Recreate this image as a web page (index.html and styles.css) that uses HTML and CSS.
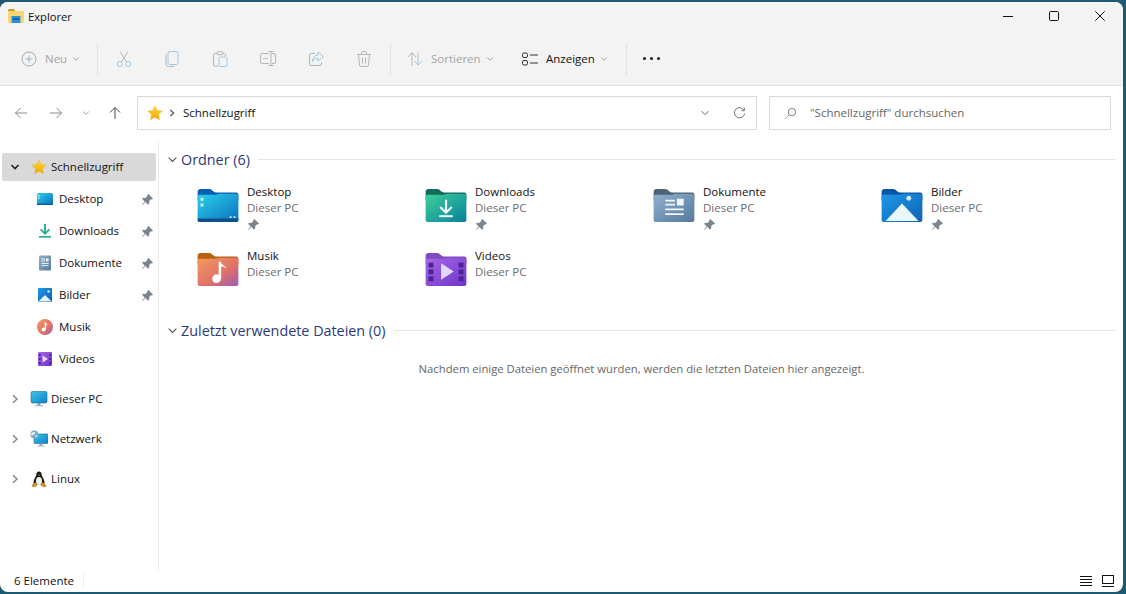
FILE: index.html
```html
<!DOCTYPE html>
<html lang="de">
<head>
<meta charset="utf-8">
<title>Explorer</title>
<link rel="stylesheet" href="styles.css">
</head>
<body>
<svg class="defs" width="0" height="0" aria-hidden="true">
  <defs>
    <linearGradient id="gDesk" x1="0" y1="0" x2="1" y2="1"><stop offset="0" stop-color="#2bd0e8"/><stop offset="1" stop-color="#0a6fc0"/></linearGradient>
    <linearGradient id="gDown" x1="0" y1="0" x2="1" y2="1"><stop offset="0" stop-color="#3fd09a"/><stop offset="1" stop-color="#07809a"/></linearGradient>
    <linearGradient id="gDoc" x1="0" y1="0" x2="1" y2="1"><stop offset="0" stop-color="#8fb0cc"/><stop offset="1" stop-color="#557a9c"/></linearGradient>
    <linearGradient id="gPic" x1="0" y1="0" x2="1" y2="1"><stop offset="0" stop-color="#1f97e6"/><stop offset="1" stop-color="#0f62b4"/></linearGradient>
    <linearGradient id="gMus" x1="0" y1="0" x2="1" y2="1"><stop offset="0" stop-color="#f29a5a"/><stop offset=".6" stop-color="#e0706a"/><stop offset="1" stop-color="#9a5bb8"/></linearGradient>
    <linearGradient id="gVid" x1="0" y1="0" x2="1" y2="1"><stop offset="0" stop-color="#a767e6"/><stop offset="1" stop-color="#6d35c8"/></linearGradient>
    <linearGradient id="gStar" x1="0" y1="0" x2="0" y2="1"><stop offset="0" stop-color="#ffd83a"/><stop offset="1" stop-color="#f2a900"/></linearGradient>
    <linearGradient id="gMon" x1="0" y1="0" x2="1" y2="1"><stop offset="0" stop-color="#3cc8ea"/><stop offset="1" stop-color="#0d7fc8"/></linearGradient>
    <symbol id="star" viewBox="0 0 16 16"><path d="M8 .8l2.2 4.7 5.1.6-3.8 3.5 1 5.1L8 12.2l-4.500 2.500 1-5.100L.7 6.100l5.100-.6z" fill="url(#gStar)" stroke="#e9b44c" stroke-width=".5"/></symbol>
    <symbol id="pin" viewBox="0 0 12 12"><path d="M7 0l5 5-1.200 1-1-.2-2 2.200.2 2.200L6.600 11.600 3.700 8.700.6 11.800 0 11.400l2.900-3.300L0 5.300 1.400 4l2.200.3 2.200-2.100L5.800 1.100z" fill="#7b858e"/></symbol>
    <symbol id="chev" viewBox="0 0 10 10"><path d="M1.500 3.200L5 6.700l3.500-3.500" fill="none" stroke="currentColor" stroke-width="1"/></symbol>
    <symbol id="chevb" viewBox="0 0 10 10"><path d="M1.500 3L5 6.500 8.500 3" fill="none" stroke="currentColor" stroke-width="1.600"/></symbol>
    <symbol id="side" viewBox="0 0 10 10"><path d="M3 1.200L7 5 3 8.800" fill="none" stroke="currentColor" stroke-width="1.500"/></symbol>
    <symbol id="sd" viewBox="0 0 16 16"><rect x="0" y="2" width="16" height="12" rx="1.500" fill="url(#gDesk)"/><rect y="12.600" width="16" height="1.400" fill="#0b5e9e"/><rect x="1.200" y="4" width="1.400" height="1.400" fill="#d8f6fb"/><rect x="1.200" y="6.400" width="1.400" height="1.400" fill="#d8f6fb"/></symbol>
    <symbol id="sdl" viewBox="0 0 16 16"><path d="M8 1v9.400M3.600 6.400L8 10.800l4.400-4.400" fill="none" stroke="#25a98f" stroke-width="1.800"/><rect x="2" y="13" width="12" height="1.600" fill="#25a98f"/></symbol>
    <symbol id="sdoc" viewBox="0 0 16 16"><rect x="2" y=".5" width="12" height="15" rx="1" fill="url(#gDoc)"/><path d="M4.400 4h3.800M4.400 6h3.800M4.400 8.400h7.200M4.400 10.600h7.200" stroke="#eef4f9" stroke-width="1"/><rect x="9" y="3.400" width="2.600" height="3" fill="#eef4f9"/></symbol>
    <symbol id="spic" viewBox="0 0 16 16"><rect x="1" y="1" width="14" height="14" rx="1" fill="url(#gPic)"/><circle cx="11.600" cy="4.400" r="1.200" fill="#d9f1fd"/><path d="M1.400 14.600L8 8l6.600 6.600z" fill="#eaf7fd"/></symbol>
    <symbol id="smus" viewBox="0 0 16 16"><circle cx="8" cy="8" r="8" fill="url(#gMus)"/><path d="M8.400 3.400v6.800" stroke="#fff" stroke-width="1.500"/><path d="M8.400 3.400c.6 1.400 2.200 1.600 2.600 3-.8-.7-1.600-.9-2.600-1z" fill="#fff"/><circle cx="6.600" cy="10.600" r="2" fill="#fff"/></symbol>
    <symbol id="svid" viewBox="0 0 16 16"><rect x="1" y="1" width="14" height="14" rx="1" fill="url(#gVid)"/><path d="M2 3h1.600v2H2zM2 7h1.600v2H2zM2 11h1.600v2H2zM12.400 3H14v2h-1.600zM12.400 7H14v2h-1.600zM12.400 11H14v2h-1.600z" fill="#3f1c8a"/><path d="M5.600 4.400v7.200L11 8z" fill="#e9dcff"/></symbol>
    <symbol id="mon" viewBox="0 0 18 18"><rect x="1" y="1.500" width="16" height="11.500" rx="1.400" fill="url(#gMon)" stroke="#1b6a94" stroke-width=".6"/><rect x="7.600" y="13" width="2.800" height="2.400" fill="#8a9ba8"/><rect x="5" y="15.200" width="8" height="1.100" fill="#9eafbb"/></symbol>
    <symbol id="net" viewBox="0 0 18 18"><rect x="4" y="4" width="14" height="9.500" rx="1" fill="url(#gMon)" stroke="#1b6a94" stroke-width=".6"/><rect x="9.600" y="13.500" width="2.600" height="2" fill="#8a9ba8"/><rect x="7.400" y="15.400" width="7" height="1.100" fill="#9eafbb"/><circle cx="4.400" cy="4.400" r="3.900" fill="#7fa6c6"/><path d="M2 2.600c1.400-.8 2.400-.8 3.400 0-.2 1.400-1 2-2 2.200L1.800 6C1 5 1 3.600 2 2.600zM5.600 5.400l1.800-.6c0 1.400-.8 2.600-2 3z" fill="#e5eff6"/></symbol>
    <symbol id="tux" viewBox="0 0 18 18"><path d="M9 1.500c1.800 0 2.700 1.400 2.700 3.200 0 1.800 2.800 4.200 2.800 7.600 0 1.500-1 2.500-5.500 2.500s-5.500-1-5.500-2.500c0-3.400 2.800-5.800 2.800-7.600 0-1.800.9-3.200 2.700-3.200z" fill="#1c1c1c"/><ellipse cx="9" cy="11" rx="3" ry="4" fill="#f4f1e6"/><path d="M3 13.200l2.800-.8 1.200 3.600-3 1.200c-1 0-1.800-.3-2.500-1 .7-.9 1-1.800 1.500-3zM15 13.200l-2.800-.8-1.200 3.600 3 1.200c1 0 1.800-.3 2.500-1-.7-.9-1-1.800-1.500-3z" fill="#c9952a"/><path d="M8 4.800h2L9 6z" fill="#e3a62a"/></symbol>
    <symbol id="fDesk" viewBox="0 0 42 34"><path d="M0 3a3 3 0 0 1 3-3h9c3 0 3.500 3.500 7 3.500h21a2 2 0 0 1 2 2V12H0z" fill="#0a5fb4"/><path d="M0 8a2 2 0 0 1 2-2h17c1.500 0 2-1 3-1h18a2 2 0 0 1 2 2v25a2 2 0 0 1-2 2H2a2 2 0 0 1-2-2z" fill="url(#gDesk)"/><path d="M0 30.500h42V32a2 2 0 0 1-2 2H2a2 2 0 0 1-2-2z" fill="#0c4f8c"/><path d="M3 9h3v3H3zM3 15h3v3H3zM33 28h2v2h-2zM37 28h2v2h-2z" fill="#cdf1f9"/></symbol>
    <symbol id="fDown" viewBox="0 0 42 34"><path d="M0 3a3 3 0 0 1 3-3h9c3 0 3.500 3.500 7 3.500h21a2 2 0 0 1 2 2V12H0z" fill="#0f6b5c"/><path d="M0 8a2 2 0 0 1 2-2h17c1.500 0 2-1 3-1h18a2 2 0 0 1 2 2v25a2 2 0 0 1-2 2H2a2 2 0 0 1-2-2z" fill="url(#gDown)"/><path d="M21 11v13M15 18.500l6 6 6-6" fill="none" stroke="#f2fbf8" stroke-width="2.200"/><rect x="14" y="27" width="14" height="2" fill="#f2fbf8"/></symbol>
    <symbol id="fDoc" viewBox="0 0 42 34"><path d="M0 3a3 3 0 0 1 3-3h9c3 0 3.500 3.500 7 3.500h21a2 2 0 0 1 2 2V12H0z" fill="#4b6478"/><path d="M0 8a2 2 0 0 1 2-2h17c1.500 0 2-1 3-1h18a2 2 0 0 1 2 2v25a2 2 0 0 1-2 2H2a2 2 0 0 1-2-2z" fill="url(#gDoc)"/><path d="M12 12h10M12 16h10M12 21h19M12 26h19" stroke="#f2f7fb" stroke-width="1.800"/><rect x="24" y="10" width="7" height="7" fill="#f2f7fb"/></symbol>
    <symbol id="fPic" viewBox="0 0 42 34"><path d="M0 3a3 3 0 0 1 3-3h9c3 0 3.500 3.500 7 3.500h21a2 2 0 0 1 2 2V12H0z" fill="#0b55a8"/><path d="M0 8a2 2 0 0 1 2-2h17c1.500 0 2-1 3-1h18a2 2 0 0 1 2 2v25a2 2 0 0 1-2 2H2a2 2 0 0 1-2-2z" fill="url(#gPic)"/><circle cx="28" cy="9.500" r="2.500" fill="#cfeefc"/><path d="M4 33l17-18 17 18z" fill="#e9f7fd"/></symbol>
    <symbol id="fMus" viewBox="0 0 42 34"><path d="M0 3a3 3 0 0 1 3-3h9c3 0 3.500 3.500 7 3.500h21a2 2 0 0 1 2 2V12H0z" fill="#b8620f"/><path d="M0 8a2 2 0 0 1 2-2h17c1.500 0 2-1 3-1h18a2 2 0 0 1 2 2v25a2 2 0 0 1-2 2H2a2 2 0 0 1-2-2z" fill="url(#gMus)"/><path d="M23 9v17" stroke="#fff" stroke-width="2.600"/><path d="M23 9c1.200 3 5.500 3.500 6.500 7-2-1.800-4-2.200-6.500-2.400z" fill="#fff"/><circle cx="19.500" cy="26.500" r="4.500" fill="#fff"/></symbol>
    <symbol id="fVid" viewBox="0 0 42 34"><path d="M0 3a3 3 0 0 1 3-3h9c3 0 3.500 3.500 7 3.500h21a2 2 0 0 1 2 2V12H0z" fill="#7d4cc0"/><path d="M0 8a2 2 0 0 1 2-2h17c1.500 0 2-1 3-1h18a2 2 0 0 1 2 2v25a2 2 0 0 1-2 2H2a2 2 0 0 1-2-2z" fill="url(#gVid)"/><path d="M3 10h5v5H3zM3 17h5v5H3zM3 24h5v5H3zM34 10h5v5h-5zM34 17h5v5h-5zM34 24h5v5h-5z" fill="#4b2298"/><path d="M16 10.500v17L29 19z" fill="#e3d6fb"/></symbol>
  </defs>
</svg>
<div class="window">
  <header class="titlebar">
    <svg class="app-icon" viewBox="0 0 16 14"><path d="M0 1.500A1.500 1.500 0 0 1 1.500 0h4l2 2H0z" fill="#c99a1e"/><rect y="2" width="16" height="12" rx="1" fill="#f7d774"/><rect x="3.500" y="7" width="9" height="7" fill="#2f8fd6"/><rect x="5" y="9.500" width="6" height="1.300" fill="#0d4f8c"/></svg>
    <span class="app-title">Explorer</span>
    <div class="win-controls">
      <button class="win-btn"><svg viewBox="0 0 10 10"><path d="M0 5.500h10" stroke="#111" stroke-width="1"/></svg></button>
      <button class="win-btn"><svg viewBox="0 0 10 10"><rect x=".5" y=".5" width="9" height="9" rx="1.200" fill="none" stroke="#111"/></svg></button>
      <button class="win-btn"><svg viewBox="0 0 10 10"><path d="M.3.300l9.400 9.400M9.700.300L.3 9.700" stroke="#111" stroke-width="1"/></svg></button>
    </div>
  </header>
  <div class="toolbar">
    <button class="tool tool-new">
      <svg class="ico16" viewBox="0 0 16 16"><circle cx="8" cy="8" r="7" fill="none" stroke="#a9a9a9"/><path d="M8 4.500v7M4.500 8h7" stroke="#8fb8d8"/></svg>
      <span class="tool-label dim">Neu</span>
      <svg class="chev8 dim"><use href="#chev"/></svg>
    </button>
    <span class="vsep"></span>
    <button class="tool-icon"><svg class="ico16" viewBox="0 0 16 16"><path d="M4 .5l6.500 10.500M12 .5L5.500 11" fill="none" stroke="#b6b6b6"/><circle cx="3.800" cy="13" r="2.500" fill="none" stroke="#9cc6e6"/><circle cx="12.200" cy="13" r="2.500" fill="none" stroke="#9cc6e6"/></svg></button>
    <button class="tool-icon"><svg class="ico16" viewBox="0 0 16 16"><rect x="4" y=".5" width="10" height="13" rx="2" fill="none" stroke="#9cc6e6"/><path d="M2 3.500v9.500a2.500 2.500 0 0 0 2.500 2.500H10" fill="none" stroke="#b6b6b6"/></svg></button>
    <button class="tool-icon"><svg class="ico16" viewBox="0 0 16 16"><path d="M5 2.500H2.500a1 1 0 0 0-1 1V14a1 1 0 0 0 1 1H6M11 2.500h1.500a1 1 0 0 1 1 1V5" fill="none" stroke="#b6b6b6"/><rect x="5" y=".8" width="6" height="3" rx="1" fill="none" stroke="#b6b6b6"/><rect x="7" y="6" width="8" height="9.500" rx="1.500" fill="none" stroke="#9cc6e6"/></svg></button>
    <button class="tool-icon"><svg class="ico16" viewBox="0 0 16 16"><path d="M9 2.500H2a1.500 1.500 0 0 0-1.500 1.500v7A1.500 1.500 0 0 0 2 12.500h7M12 2.500h2a1.500 1.500 0 0 1 1.500 1.500v7a1.500 1.500 0 0 1-1.500 1.500h-2M8.500.5h5M8.500 14.500h5M11 .5v14" fill="none" stroke="#b6b6b6"/><path d="M3 7.500h5" stroke="#9cc6e6"/></svg></button>
    <button class="tool-icon"><svg class="ico16" viewBox="0 0 16 16"><path d="M7 2.500H3A1.500 1.500 0 0 0 1.500 4v9A1.500 1.500 0 0 0 3 14.500h9a1.500 1.500 0 0 0 1.500-1.500v-2" fill="none" stroke="#b6b6b6"/><path d="M10 1l5.500 4.500L10 10V7.500c-3 0-4.500 1-5.500 3 0-4 2-6 5.500-6.500z" fill="none" stroke="#9cc6e6"/></svg></button>
    <button class="tool-icon"><svg class="ico16" viewBox="0 0 16 16"><path d="M1 3.500h14M5.500 3.500V2A1.500 1.500 0 0 1 7 .5h2A1.500 1.500 0 0 1 10.500 2v1.500M2.500 3.500l1 10.500a1.500 1.500 0 0 0 1.500 1.500h6a1.500 1.500 0 0 0 1.500-1.500l1-10.500M6.500 6.500v6M9.500 6.500v6" fill="none" stroke="#b6b6b6"/></svg></button>
    <span class="vsep vsep-b"></span>
    <button class="tool tool-sort">
      <svg class="ico16" viewBox="0 0 16 16"><path d="M5 15V2M1 6l4-4.500L9 6" fill="none" stroke="#b6b6b6"/><path d="M11 1.500V14M7.500 10l3.500 4 3.500-4" fill="none" stroke="#9cc6e6"/></svg>
      <span class="tool-label dim">Sortieren</span>
      <svg class="chev8 dim"><use href="#chev"/></svg>
    </button>
    <button class="tool tool-view">
      <svg class="ico16" viewBox="0 0 16 16"><rect x=".5" y="2" width="5" height="4.500" rx="1.500" fill="none" stroke="#333"/><rect x=".5" y="9.500" width="5" height="4.500" rx="1.500" fill="none" stroke="#333"/><path d="M8 4h8M8 12h8" stroke="#333"/></svg>
      <span class="tool-label">Anzeigen</span>
      <svg class="chev8 dim"><use href="#chev"/></svg>
    </button>
    <span class="vsep vsep-c"></span>
    <button class="tool-more"><span class="dot"></span><span class="dot"></span><span class="dot"></span></button>
  </div>
  <div class="navrow">
    <div class="navbtns">
      <svg class="nav-ico" viewBox="0 0 14 14"><path d="M13 7H1.500M6.500 2L1.500 7l5 5" fill="none" stroke="#8a8a8a" stroke-width="1"/></svg>
      <svg class="nav-ico nav-fwd" viewBox="0 0 14 14"><path d="M1 7h11.500M7.500 2l5 5-5 5" fill="none" stroke="#8a8a8a" stroke-width="1"/></svg>
      <svg class="chev8 nav-drop"><use href="#chev"/></svg>
      <svg class="nav-ico nav-up" viewBox="0 0 14 14"><path d="M7 13V1.500M2 6.500l5-5 5 5" fill="none" stroke="#444" stroke-width="1"/></svg>
    </div>
    <div class="addr">
      <svg class="addr-star"><use href="#star"/></svg>
      <svg class="addr-sep"><use href="#side"/></svg>
      <span class="addr-text">Schnellzugriff</span>
      <svg class="chev10 addr-drop"><use href="#chev"/></svg>
      <svg class="addr-refresh" viewBox="0 0 14 14"><path d="M11.800 3.500A5.500 5.500 0 1 0 12.500 7M12.200.8v3.200H9" fill="none" stroke="#666"/></svg>
    </div>
    <div class="search">
      <svg class="search-ico" viewBox="0 0 14 14"><circle cx="8.500" cy="5.500" r="4" fill="none" stroke="#777"/><path d="M5.500 8.500L1 13" stroke="#b79ab0"/></svg>
      <span class="search-text">"Schnellzugriff" durchsuchen</span>
    </div>
  </div>
  <div class="body">
    <nav class="sidebar">
      <div class="side-row side-top"><svg class="tw tw-dark"><use href="#chevb"/></svg><svg class="side-ico"><use href="#star"/></svg><span>Schnellzugriff</span></div>
      <div class="side-row side-child"><svg class="side-ico"><use href="#sd"/></svg><span>Desktop</span><svg class="pin"><use href="#pin"/></svg></div>
      <div class="side-row side-child"><svg class="side-ico"><use href="#sdl"/></svg><span>Downloads</span><svg class="pin"><use href="#pin"/></svg></div>
      <div class="side-row side-child"><svg class="side-ico"><use href="#sdoc"/></svg><span>Dokumente</span><svg class="pin"><use href="#pin"/></svg></div>
      <div class="side-row side-child"><svg class="side-ico"><use href="#spic"/></svg><span>Bilder</span><svg class="pin"><use href="#pin"/></svg></div>
      <div class="side-row side-child"><svg class="side-ico"><use href="#smus"/></svg><span>Musik</span></div>
      <div class="side-row side-child"><svg class="side-ico"><use href="#svid"/></svg><span>Videos</span></div>
      <div class="side-row side-root"><svg class="tw"><use href="#side"/></svg><svg class="side-ico"><use href="#mon"/></svg><span>Dieser PC</span></div>
      <div class="side-row side-root"><svg class="tw"><use href="#side"/></svg><svg class="side-ico"><use href="#net"/></svg><span>Netzwerk</span></div>
      <div class="side-row side-root"><svg class="tw"><use href="#side"/></svg><svg class="side-ico"><use href="#tux"/></svg><span>Linux</span></div>
    </nav>
    <main class="content">
      <div class="group-head"><svg class="group-chev"><use href="#chev"/></svg><h2>Ordner (6)</h2><span class="rule"></span></div>
      <div class="tiles">
        <div class="tile"><svg class="folder"><use href="#fDesk"/></svg><div class="tile-text"><div class="t-name">Desktop</div><div class="t-sub">Dieser PC</div><svg class="t-pin"><use href="#pin"/></svg></div></div>
        <div class="tile"><svg class="folder"><use href="#fDown"/></svg><div class="tile-text"><div class="t-name">Downloads</div><div class="t-sub">Dieser PC</div><svg class="t-pin"><use href="#pin"/></svg></div></div>
        <div class="tile"><svg class="folder"><use href="#fDoc"/></svg><div class="tile-text"><div class="t-name">Dokumente</div><div class="t-sub">Dieser PC</div><svg class="t-pin"><use href="#pin"/></svg></div></div>
        <div class="tile"><svg class="folder"><use href="#fPic"/></svg><div class="tile-text"><div class="t-name">Bilder</div><div class="t-sub">Dieser PC</div><svg class="t-pin"><use href="#pin"/></svg></div></div>
        <div class="tile"><svg class="folder"><use href="#fMus"/></svg><div class="tile-text"><div class="t-name">Musik</div><div class="t-sub">Dieser PC</div></div></div>
        <div class="tile"><svg class="folder"><use href="#fVid"/></svg><div class="tile-text"><div class="t-name">Videos</div><div class="t-sub">Dieser PC</div></div></div>
      </div>
      <div class="group-head group-recent"><svg class="group-chev"><use href="#chev"/></svg><h2>Zuletzt verwendete Dateien (0)</h2><span class="rule"></span></div>
      <p class="empty">Nachdem einige Dateien geöffnet wurden, werden die letzten Dateien hier angezeigt.</p>
    </main>
  </div>
  <footer class="status">
    <span class="status-text">6 Elemente</span>
    <span class="status-sep"></span>
    <span class="status-views">
      <svg class="view-btn view-on" viewBox="0 0 14 14"><path d="M1 2.500h12M1 5.500h12M1 8.500h12M1 11.500h12" stroke="#111"/></svg>
      <svg class="view-btn" viewBox="0 0 14 14"><rect x="1.500" y="1.500" width="11" height="8" fill="none" stroke="#111"/><path d="M1 12.500h12" stroke="#111"/></svg>
    </span>
  </footer>
</div>
</body>
</html>
```

FILE: styles.css
```css
* { box-sizing: border-box; }
html, body { margin: 0; height: 100%; }
body {
  background: #1b5a70;
  font-family: "Open Sans", "Noto Sans", sans-serif;
  font-size: 11.5px;
  color: #111;
  overflow: hidden;
  padding: 2px 3px 2px 0;
}
.defs { position: absolute; }
button { border: 0; background: none; padding: 0; font: inherit; color: inherit; }
svg { display: block; flex: none; }

.window {
  height: 590px;
  background: #fff;
  border-radius: 8px;
  display: flex;
  flex-direction: column;
  overflow: hidden;
}

.titlebar {
  height: 28px;
  background: #f3f3f3;
  display: flex;
  align-items: center;
  padding-left: 8px;
}
.app-icon { width: 16px; height: 14px; margin-right: 4px; }
.app-title { font-size: 11.2px; }
.win-controls { margin-left: auto; display: flex; }
.win-btn { width: 46px; height: 28px; display: flex; align-items: center; justify-content: center; }
.win-btn svg { width: 10px; height: 10px; }

.toolbar {
  height: 56px;
  background: #f3f3f3;
  border-bottom: 1px solid #e2e2e2;
  display: flex;
  align-items: center;
  padding: 2px 0 0 21px;
}
.ico16 { width: 16px; height: 16px; }
.tool { display: flex; align-items: center; }
.tool-label { margin-left: 8px; }
.tool-label.dim { color: #a3a3a3; }
.chev8 { width: 8px; height: 8px; margin-left: 5px; }
.dim { color: #8a8a8a; }
.tool-new { width: 76px; }
.vsep { width: 1px; height: 32px; background: #e2e2e2; margin-right: 2px; }
.tool-icon { width: 48px; height: 32px; display: flex; align-items: center; justify-content: center; }
.vsep-b { margin-left: 2px; margin-right: 0; }
.tool-sort { width: 116px; padding-left: 16px; }
.tool-view { width: 119px; padding-left: 15px; }
.vsep-c { margin: 0; }
.tool-more { margin-left: 16px; display: flex; gap: 4px; align-items: center; }
.dot { width: 3px; height: 3px; border-radius: 50%; background: #222; }

.navrow {
  height: 55px;
  display: flex;
  align-items: flex-start;
  padding-top: 10px;
}
.navbtns { width: 137px; height: 33px; display: flex; align-items: center; padding-left: 14px; }
.nav-ico { width: 14px; height: 14px; }
.nav-fwd { margin-left: 21px; }
.nav-drop { margin-left: 19px; color: #8a8a8a; }
.nav-up { margin-left: 18px; }
.addr, .search {
  height: 34px;
  border: 1px solid #d9d9d9;
  display: flex;
  align-items: center;
  background: #fff;
}
.addr { width: 620px; padding-left: 9px; }
.addr-star { width: 16px; height: 16px; }
.addr-sep { width: 8px; height: 8px; margin-left: 5px; color: #555; }
.addr-text { margin: 0 0 2px 7px; }
.chev10 { width: 10px; height: 10px; }
.addr-drop { margin-left: auto; color: #666; }
.addr-refresh { width: 13px; height: 13px; margin: 0 10px 0 23px; }
.search { width: 342px; margin-left: 12px; padding-left: 14px; }
.search-ico { width: 13px; height: 13px; }
.search-text { margin: 0 0 2px 13px; color: #666; }

.body { flex: 1; min-height: 0; display: flex; }
.sidebar {
  width: 159px;
  border-right: 1px solid #eaeaea;
  padding-top: 10px;
}
.side-row { height: 32px; display: flex; align-items: center; }
.side-row span { padding-bottom: 2px; }
.side-top { height: 28px; margin: 2px; background: #d9d9d9; border-radius: 2px; padding-left: 8px; }
.tw { width: 10px; height: 10px; margin-right: 11px; color: #333; }
.tw-dark { color: #222; }
.side-ico { width: 16px; height: 16px; margin-right: 4px; }
.side-child { padding-left: 37px; }
.side-child .side-ico { margin-right: 6px; }
.side-child span { flex: 1; }
.pin { width: 11px; height: 11px; margin-right: 5px; }
.side-root { padding-left: 10px; }
.side-root .tw { color: #8a8a8a; margin-right: 10px; }
.side-root .side-ico { width: 18px; height: 18px; margin-right: 3px; }
.side-child + .side-root { margin-top: 8px; }
.side-root + .side-root { margin-top: 8px; }

.content { flex: 1; min-width: 0; padding: 4px 7px 0 8px; }
.group-head { height: 28px; display: flex; align-items: center; }
.group-chev { width: 11px; height: 11px; color: #555; margin-right: 3px; }
.group-head h2 { margin: 0; font-size: 14.35px; font-weight: 400; color: #2c3a7a; }
.rule { flex: 1; height: 1px; background: #e5e5e5; margin-left: 8px; }
.tiles { display: grid; grid-template-columns: repeat(4, 228px); grid-auto-rows: 64px; padding: 10px 0 0 30px; }
.tile { display: flex; align-items: flex-start; }
.folder { width: 42px; height: 33px; margin: 6px 8px 0 0; }
.tile-text { line-height: 16px; padding-top: 1px; }
.t-sub { color: #6d6d6d; }
.t-pin { width: 11px; height: 11px; margin: 3px 0 0 1px; }
.group-recent { margin-top: 5px; }
.empty { margin: 17px 0 0; text-align: center; color: #666; font-size: 11.27px; }

.status {
  height: 22px;
  display: flex;
  align-items: center;
  padding: 0 0 1px 14px;
}
.status-sep { width: 1px; height: 16px; background: #efefef; margin-left: 9px; }
.status-views { margin-left: auto; display: flex; gap: 8px; padding-right: 8px; }
.view-btn { width: 14px; height: 14px; }
```
